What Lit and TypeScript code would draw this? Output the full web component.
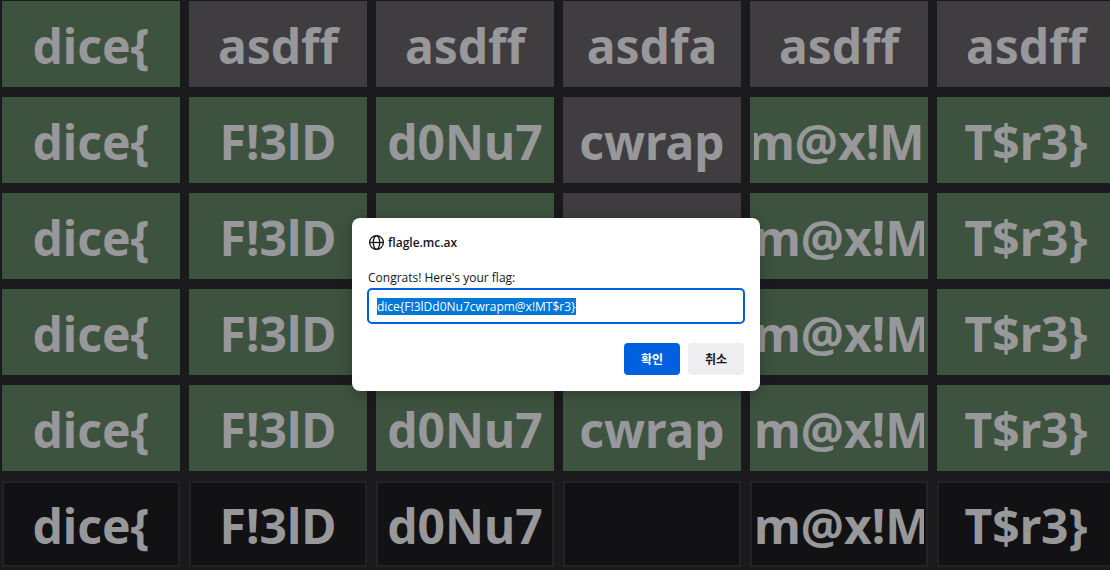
import { LitElement, html, css } from "lit";
import { customElement, property, query } from "lit/decorators.js";
import { classMap } from "lit/directives/class-map.js";

type Mark = "correct" | "absent" | "open";

interface Guess {
  text: string;
  mark: Mark;
  scrolled?: boolean;
}

const g = (text: string, mark: Mark = "correct", scrolled = false): Guess => ({ text, mark, scrolled });

const BOARD: Guess[][] = [
  [g("dice{"), g("asdff", "absent"), g("asdff", "absent"), g("asdfa", "absent"), g("asdff", "absent"), g("asdff", "absent")],
  [g("dice{"), g("F!3lD"), g("d0Nu7"), g("cwrap", "absent"), g("m@x!M", "correct", true), g("T$r3}")],
  [g("dice{"), g("F!3lD"), g("d0Nu7"), g("cwrap", "absent"), g("m@x!M"), g("T$r3}")],
  [g("dice{"), g("F!3lD"), g("d0Nu7"), g("cwrap", "absent"), g("m@x!M"), g("T$r3}")],
  [g("dice{"), g("F!3lD"), g("d0Nu7"), g("cwrap"), g("m@x!M"), g("T$r3}")],
  [g("dice{", "open"), g("F!3lD", "open"), g("d0Nu7", "open"), g("", "open"), g("m@x!M", "open"), g("T$r3}", "open")],
];

@customElement("flag-board")
class FlagBoard extends LitElement {
  static styles = css`
    :host {
      display: block;
    }
    .board {
      display: grid;
      grid-template-columns: repeat(6, minmax(0, 1fr));
      gap: 10px 9px;
      padding: 1px 0 3px 2px;
      margin-right: -5px;
    }
    .cell {
      box-sizing: border-box;
      width: 100%;
      height: 86px;
      margin: 0;
      padding: 4px 2px 2px;
      border: 2px solid transparent;
      border-radius: 0;
      outline: none;
      color: #98989b;
      font: bold 48px/64px "Noto Sans", sans-serif;
      text-align: center;
    }
    .correct {
      background: #3e533f;
      border-color: #3e533f;
    }
    .absent {
      background: #403d40;
      border-color: #403d40;
    }
    .open {
      background: #121214;
      border-color: #232325;
    }
  `;

  firstUpdated() {
    this.renderRoot.querySelectorAll<HTMLInputElement>(".scrolled").forEach((cell) => {
      cell.scrollLeft = cell.scrollWidth;
    });
  }

  render() {
    return html`
      <div class="board">
        ${BOARD.map((row, r) =>
          row.map(
            (cell, c) => html`<input
              class=${classMap({ cell: true, [cell.mark]: true, scrolled: !!cell.scrolled })}
              type="text"
              maxlength="5"
              spellcheck="false"
              aria-label=${`Row ${r + 1}, part ${c + 1}`}
              .value=${cell.text}
            />`
          )
        )}
      </div>
    `;
  }
}

@customElement("prompt-dialog")
class PromptDialog extends LitElement {
  @property() site = "";
  @property() message = "";
  @property() value = "";
  @query(".field") field!: HTMLInputElement;

  static styles = css`
    :host {
      position: absolute;
      inset: 0;
      display: flex;
      justify-content: center;
      align-items: flex-start;
      padding: 218px 0 0 2px;
    }
    .dialog {
      position: static;
      box-sizing: border-box;
      width: 408px;
      max-width: 100%;
      margin: 0;
      padding: 16px;
      border: 0;
      border-radius: 8px;
      background: #fff;
      color: #15141a;
      box-shadow: 0 2px 14px rgba(20, 20, 26, 0.4);
      font: 12px/16px "Open Sans", "Noto Sans CJK KR", sans-serif;
    }
    .title {
      display: flex;
      align-items: center;
      gap: 3px;
      margin: 0 0 19px;
      font-size: 12px;
      font-weight: 600;
    }
    .globe {
      width: 17px;
      height: 17px;
      fill: none;
      stroke: currentColor;
      stroke-width: 1.3;
    }
    .message {
      display: block;
      margin-bottom: 2px;
    }
    .field {
      box-sizing: border-box;
      width: calc(100% + 2px);
      height: 36px;
      margin: 0 -1px;
      padding: 0 8px;
      border: 2px solid #0060df;
      border-radius: 5px;
      outline: none;
      background: #fff;
      color: inherit;
      font: inherit;
    }
    .field::selection {
      background: #0078d7;
      color: #fff;
    }
    .actions {
      display: flex;
      justify-content: flex-end;
      gap: 8px;
      margin-top: 19px;
    }
    .button {
      min-width: 56px;
      height: 32px;
      padding: 0 8px;
      border: 0;
      border-radius: 4px;
      background: #eeeef0;
      color: #15141a;
      font: 600 12px/16px "Noto Sans CJK KR", sans-serif;
    }
    .primary {
      background: #0060df;
      color: #fff;
    }
  `;

  firstUpdated() {
    this.field.focus();
    this.field.select();
  }

  render() {
    return html`
      <dialog class="dialog" open aria-labelledby="title">
        <h1 class="title" id="title">
          <svg class="globe" viewBox="0 0 17 17" aria-hidden="true">
            <circle cx="8.5" cy="8.5" r="6.9" />
            <ellipse cx="8.5" cy="8.5" rx="3.2" ry="6.9" />
            <path d="M1.6 8.5h13.8" />
          </svg>
          ${this.site}
        </h1>
        <label class="message" for="flag">${this.message}</label>
        <input class="field" id="flag" type="text" spellcheck="false" .value=${this.value} />
        <div class="actions">
          <button class="button primary" type="button">확인</button>
          <button class="button" type="button">취소</button>
        </div>
      </dialog>
    `;
  }
}

@customElement("app-root")
class AppRoot extends LitElement {
  static styles = css`
    :host {
      display: block;
      position: relative;
      min-height: 100vh;
      overflow: hidden;
      background: #1a1a1c;
    }
  `;

  render() {
    return html`
      <flag-board></flag-board>
      <prompt-dialog
        site="flagle.mc.ax"
        message="Congrats! Here's your flag:"
        value="dice{F!3lDd0Nu7cwrapm@x!MT$r3}"
      ></prompt-dialog>
    `;
  }
}
